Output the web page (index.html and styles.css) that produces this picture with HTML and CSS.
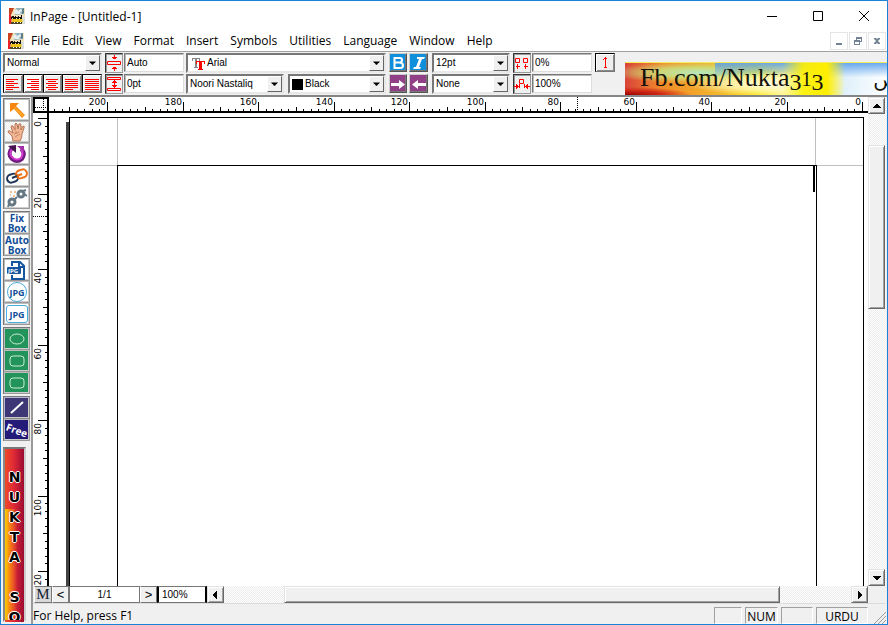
FILE: index.html
```html
<!DOCTYPE html>
<html lang="en">
<head>
<meta charset="utf-8">
<title>InPage - [Untitled-1]</title>
<link rel="stylesheet" href="styles.css">
</head>
<body>
<svg class="defs" aria-hidden="true">
  <symbol id="app" viewBox="0 0 16 16">
    <rect width="16" height="16" fill="#f1e3bd"/>
    <path d="M0 0h5l-3 7-2 6z" fill="#c8421e"/><path d="M0 6l3 3-1 7H0z" fill="#e8232a"/>
    <path d="M7 0h8v6l-9 1z" fill="#8fb3bd"/><path d="M5 3l3-2 1 2 3-2 2 2-3 1 1 2H6z" fill="#e9eef0"/><path d="M13 1l2-1v5l-2 1z" fill="#5d7d86"/>
    <path d="M2 9h1V8h2v1h1V8h1v1h2V8h1v1h2V7h1v4h-2v-1h-1v1H8v-1H7v1H4v-1H3v1H2z" fill="#17130d"/>
    <path d="M3 11h11v3H3z" fill="#ecc51c"/><path d="M2 14h11v2H2z" fill="#4d4726"/><path d="M13 9h3v7h-2z" fill="#d9dfe0"/>
    <path d="M5 14h1v1H5zM8 14h1v1H8zM11 14h1v1h-1z" fill="#fff"/>
  </symbol>
  <symbol id="down" viewBox="0 0 16 16"><path d="M4 6h8v1h-1v1h-1v1H9v1H7V9H6V8H5V7H4z"/></symbol>
  <symbol id="up" viewBox="0 0 16 16"><path d="M4 10h8V9h-1V8h-1V7H9V6H7v1H6v1H5v1H4z"/></symbol>
  <symbol id="left" viewBox="0 0 16 16"><path d="M9 4v8H8v-1H7v-1H6V9H5V7h1V6h1V5h1V4z"/></symbol>
  <symbol id="right" viewBox="0 0 16 16"><path d="M6 4v8h1v-1h1v-1h1V9h1V7H9V6H8V5H7V4z"/></symbol>
</svg>

<div class="window">
  <header class="titlebar">
    <svg class="app-icon"><use href="#app"/></svg>
    <h1>InPage - [Untitled-1]</h1>
    <div class="caption">
      <button aria-label="Minimize"><svg viewBox="0 0 12 12"><path d="M1 6.500h10"/></svg></button>
      <button aria-label="Maximize"><svg viewBox="0 0 12 12"><path d="M1.500 1.500h9v9h-9z"/></svg></button>
      <button aria-label="Close"><svg viewBox="0 0 12 12"><path d="M1 1l10 10M11 1L1 11"/></svg></button>
    </div>
  </header>

  <nav class="menubar">
    <svg class="app-icon"><use href="#app"/></svg>
    <div class="menus">
      <button>File</button><button>Edit</button><button>View</button><button>Format</button><button>Insert</button><button>Symbols</button><button>Utilities</button><button>Language</button><button>Window</button><button>Help</button>
    </div>
    <div class="mdi">
      <button aria-label="Minimize document"><svg viewBox="0 0 16 16"><path d="M5 10h6v2H5z"/></svg></button>
      <button aria-label="Restore document"><svg viewBox="0 0 16 16"><path d="M6 4h6v5h-2V8h1V6H7v1H6zM4 7h6v5H4zM5 9v2h4V9z" fill-rule="evenodd"/></svg></button>
      <button aria-label="Close document"><svg viewBox="0 0 16 16"><path d="M5 5h2l1 1 1-1h2v1L9 8l2 2v1H9L8 10l-1 1H5v-1l2-2-2-2z"/></svg></button>
    </div>
  </nav>

  <div class="toolbar">
    <div class="group g-style">
      <label class="combo"><select aria-label="Style"><option>Normal</option></select><svg><use href="#down"/></svg></label>
      <div class="aligns">
        <button class="tb" aria-label="Align left"><svg viewBox="0 0 16 14"><path d="M1 2.500h12M1 4.500h8M1 6.500h12M1 8.500h8M1 10.500h13M1 12.500h7"/></svg></button>
        <button class="tb on" aria-label="Align right"><svg viewBox="0 0 16 14"><path d="M2 2.500h12M6 4.500h8M2 6.500h12M6 8.500h8M2 10.500h12M6 12.500h8"/></svg></button>
        <button class="tb" aria-label="Align centre"><svg viewBox="0 0 16 14"><path d="M2 2.500h12M4 4.500h8M2 6.500h12M4 8.500h8M2 10.500h12M4 12.500h8"/></svg></button>
        <button class="tb" aria-label="Justify"><svg viewBox="0 0 16 14"><path d="M1 2.500h13M1 4.500h13M1 6.500h13M1 8.500h13M1 10.500h13M1 12.500h8"/></svg></button>
        <button class="tb" aria-label="Force justify"><svg viewBox="0 0 16 14"><path d="M1 2.500h14M1 4.500h14M1 6.500h14M1 8.500h14M1 10.500h14M1 12.500h14"/></svg></button>
      </div>
    </div>
    <div class="group g-space g-lines">
      <span class="sign"><svg viewBox="0 0 16 16"><path d="M1.500 6.500h13v3h-13zM8.500 0v4M8.500 12v4M6 2.500h5M7 3.500h3M7 12.500h3M6 13.500h5"/></svg></span><input aria-label="Line spacing" value="Auto">
      <span class="sign"><svg viewBox="0 0 16 16"><path d="M1.500 1.500h13v2h-13zM1.500 12.500h13v2h-13zM8.500 4v8M7 5.500h3M6 6.500h5M6 9.500h5M7 10.500h3"/></svg></span><input aria-label="Paragraph spacing" value="0pt">
    </div>
    <div class="group g-font">
      <label class="combo wide"><svg class="tt" viewBox="0 0 14 14"><path d="M0 1h8v3H7V2H5v8h1v1H2v-1h1V2H1v2H0z" fill="#888"/><path d="M4 4h9v3h-1V5h-2v7h1v1H6v-1h1V5H5v2H4z" fill="#f00"/></svg><select class="with-icon" aria-label="Font"><option>Arial</option></select><svg><use href="#down"/></svg></label>
      <label class="combo"><select aria-label="Urdu font"><option>Noori Nastaliq</option></select><svg><use href="#down"/></svg></label>
      <label class="combo"><span class="swatch"></span><select aria-label="Colour"><option>Black</option></select><svg><use href="#down"/></svg></label>
    </div>
    <div class="group g-marks">
      <button class="mark blue" aria-label="Bold"><svg viewBox="0 0 16 16"><path d="M4.500 3h5.500q2 0 2 2t-2 2.500q3 .5 3 3T10 13H4.500zM5 7.500h5" fill="none" stroke="#fff" stroke-width="2"/></svg></button>
      <button class="mark blue" aria-label="Italic"><svg viewBox="0 0 16 16"><path d="M6 2h8l-1 2h-2L8 12h2l-1 2H2l1-2h2l3-8H6z" fill="#fff"/></svg></button>
      <button class="mark plum" aria-label="Left to right"><svg viewBox="0 0 16 16"><path d="M1 7h8V4l6 4.500L9 13v-3H1z" fill="#fff"/></svg></button>
      <button class="mark plum" aria-label="Right to left"><svg viewBox="0 0 16 16"><path d="M15 7H7V4L1 8.500 7 13v-3h8z" fill="#fff"/></svg></button>
    </div>
    <div class="group g-size">
      <label class="combo"><select aria-label="Font size"><option>12pt</option></select><svg><use href="#down"/></svg></label>
      <label class="combo"><select aria-label="Text effect"><option>None</option></select><svg><use href="#down"/></svg></label>
    </div>
    <div class="group g-space">
      <span class="sign"><svg viewBox="0 0 16 16"><path d="M1.500 3.500h4v4h-4zM9.500 3.500h4v4h-4zM3.500 9v5M2 11.500h4M11.500 9v5M10 11.500h4"/></svg></span><input aria-label="Letter spacing" value="0%">
      <span class="sign"><svg viewBox="0 0 16 16"><path d="M5.500 3.500h4v4h-4zM0 10.500h5M11 10.500h5M2.500 8v5M13.500 8v5M3.500 9v3M12.500 9v3M5.500 8v4M10.500 8v4"/></svg></span><input aria-label="Text scale" value="100%">
    </div>
    <button class="tb caret-up" aria-label="Raise"><svg viewBox="0 0 16 16"><path d="M8.500 2v11M7 3.500h3M6 4.500h1M7 12.500h3"/></svg></button>
    <div class="banner"><span>Fb.com/Nukta<span class="low">3</span><span class="small">1</span><span class="low">3</span></span><span class="urdu" lang="ur">یں</span></div>
  </div>

  <div class="body">
    <aside class="tools">
      <div class="set">
        <button aria-label="Pointer"><svg viewBox="0 0 24 20"><path d="M5 3h9l-3 3 9 9-3 3-8-9-4 3z" fill="#f7860e"/><path d="M9 8l8 9 2-2-9-8z" fill="#fca72b"/></svg></button>
        <button class="dither" aria-label="Hand"><svg viewBox="0 0 24 20"><path d="M8 19l-1-5-4-4q0-2 2-1l3 2-2-6q0-2 2-1l2 4V2q1-2 2 0l1 5 1-5q2-1 2 1v5l2-4q2 0 1 2l-2 6q0 4-2 7z" fill="#f3b694" stroke="#b57557"/><path d="M9 12l5-2M10 15l5-3M11 9v3" stroke="#c98766" fill="none"/></svg></button>
        <button aria-label="Rotate"><svg viewBox="0 0 24 20"><path d="M7 4q-5 6 0 11 5 4 10 0 4-6-1-10" fill="none" stroke="#731b80" stroke-width="4"/><path d="M7 5q-4 5 1 9 4 3 8 0 3-4 0-9" fill="none" stroke="#d53bd4" stroke-width="2"/><path d="M3 2l8-1v8z" fill="#46124f"/><path d="M12 2h7v6z" fill="#a12fa8"/></svg></button>
        <button aria-label="Link"><svg viewBox="0 0 24 20"><g fill="none" stroke-width="2"><rect x="2" y="8" width="11" height="8" rx="4" transform="rotate(-18 8 12)" stroke="#1d3557"/><rect x="11" y="4" width="11" height="8" rx="4" transform="rotate(-18 16 8)" stroke="#ef6f12"/><path d="M7 12l5-2" stroke="#1d3557"/><path d="M12 10l5-2" stroke="#ef6f12"/></g></svg></button>
        <button aria-label="Unlink"><svg viewBox="0 0 24 20"><g fill="none" stroke="#657782" stroke-width="3"><circle cx="16" cy="6" r="3"/><circle cx="7" cy="14" r="3"/></g><g stroke="#657782" stroke-width="2"><path d="M19 6l3 2M18 3l3-1M9 12l3-3M4 16l-1 3"/></g><path d="M5 4h2M9 4h2M5 7h1M8 8h2" stroke="#f18426"/></svg></button>
      </div>
      <div class="set words">
        <button>Fix<br>Box</button>
        <button>Auto<br>Box</button>
      </div>
      <div class="set jpg">
        <button aria-label="Picture file"><svg viewBox="0 0 24 20"><path d="M7 6V2h8l4 4v13H7v-4M14 2v5h5" fill="none" stroke="#15569e" stroke-width="2"/><rect x="2" y="7" width="14" height="7" rx="1" fill="#15569e"/><text x="3" y="13">JPG</text></svg></button>
        <button class="round">JPG</button>
        <button class="square">JPG</button>
      </div>
      <div class="set green">
        <button aria-label="Ellipse"><svg viewBox="0 0 24 20"><ellipse cx="12" cy="10" rx="7" ry="5"/></svg></button>
        <button aria-label="Rounded box"><svg viewBox="0 0 24 20"><rect x="5" y="5" width="14" height="10" rx="3"/></svg></button>
        <button aria-label="Box"><svg viewBox="0 0 24 20"><rect x="5" y="5" width="14" height="10" rx="3"/></svg></button>
      </div>
      <div class="set navy">
        <button class="line" aria-label="Line"><svg viewBox="0 0 24 20"><path d="M6 15L18 4" stroke="#fff" stroke-width="2"/></svg></button>
        <button class="free"><span>Free</span></button>
      </div>
      <div class="strip"><span>N</span><span>U</span><span>K</span><span>T</span><span>A</span><span></span><span>S</span><span>O</span></div>
    </aside>

    <div class="main">
      <div class="work">
        <div class="corner"><svg viewBox="0 0 12 12"><path d="M8.500 0v12M0 8.500h12" stroke="#000" stroke-dasharray="1 1"/></svg></div>
        <svg class="ruler-h" id="ruler-h"></svg>
        <svg class="ruler-v" id="ruler-v"></svg>
        <div class="canvas">
          <div class="page"><div class="frame"><span class="cursor"></span></div></div>
        </div>
        <div class="vscroll">
          <button class="arrow" aria-label="Scroll up"><svg><use href="#up"/></svg></button>
          <div class="thumb"></div>
          <button class="arrow end" aria-label="Scroll down"><svg><use href="#down"/></svg></button>
        </div>
      </div>
      <div class="pager">
        <button class="master">M</button><button class="step">&lt;</button><input class="page-no" aria-label="Page" value="1/1"><button class="step">&gt;</button><input class="zoom" aria-label="Zoom" value="100%">
        <div class="hscroll">
          <button class="arrow" aria-label="Scroll left"><svg><use href="#left"/></svg></button>
          <div class="thumb"></div>
          <button class="arrow end" aria-label="Scroll right"><svg><use href="#right"/></svg></button>
        </div>
        <div class="box"></div>
      </div>
      <footer class="status">
        <span class="message">For Help, press F1</span>
        <span class="cell caps"></span><span class="cell num">NUM</span><span class="cell scrl"></span><span class="cell lang">URDU</span>
        <svg class="grip" viewBox="0 0 12 14"><path d="M0 14L12 2M4 14l8-8M8 14l4-4" stroke="#9a9a9a"/></svg>
      </footer>
    </div>
  </div>
</div>
<script src="rulers.js"></script>
</body>
</html>
```
FILE: rulers.js
```js
// Rulers in millimetres; the horizontal one counts leftwards from the page's right edge.
const PX_PER_MM = 3.775;
const ORIGIN_FROM_RIGHT = 6;
const ORIGIN_FROM_TOP = 5;

function tickLength(mm) {
  if (mm % 20 === 0) return 9;
  return mm % 10 === 0 ? 4 : 2;
}

function drawHorizontal() {
  const svg = document.getElementById('ruler-h');
  const width = svg.clientWidth;
  let out = '';
  for (let mm = 0; mm * PX_PER_MM < width; mm += 2) {
    const x = Math.round(width - ORIGIN_FROM_RIGHT - mm * PX_PER_MM);
    const len = tickLength(mm);
    out += `<rect x="${x}" y="${14 - len}" width="1" height="${len}"/>`;
    if (len === 9) out += `<text x="${x - 1}" y="8" text-anchor="end">${mm}</text>`;
  }
  out += `<path d="M${width - 290.5} 0v14" stroke="#000" stroke-dasharray="1 1"/>`;
  svg.innerHTML = out;
}

function drawVertical() {
  const svg = document.getElementById('ruler-v');
  const height = svg.clientHeight;
  let out = '';
  for (let mm = 0; mm * PX_PER_MM < height + 20; mm += 2) {
    const y = Math.round(ORIGIN_FROM_TOP + mm * PX_PER_MM);
    const len = tickLength(mm);
    out += `<rect x="${14 - len}" y="${y}" width="${len}" height="1"/>`;
    if (len === 9) out += `<text transform="translate(8 ${y + 3}) rotate(-90)" text-anchor="end">${mm}</text>`;
  }
  out += '<path d="M0 103.500h14" stroke="#000" stroke-dasharray="1 1"/>';
  svg.innerHTML = out;
}

function draw() {
  drawHorizontal();
  drawVertical();
}

draw();
window.addEventListener('resize', draw);
```
FILE: styles.css
```css
* { box-sizing: border-box; }
body { margin: 0; font-family: "Open Sans", "Noto Sans", sans-serif; font-size: 12px; color: #000; }
button, input, select { font: inherit; color: inherit; margin: 0; padding: 0; border: 0; border-radius: 0; background: none; }
button { display: flex; align-items: center; justify-content: center; }
svg { display: block; flex: none; }
.defs { display: none; }

.window { display: flex; flex-direction: column; height: 100vh; border: 1px solid #1883d7; background: #f0f0f0; overflow: hidden; }

.titlebar { display: flex; align-items: center; flex: none; height: 30px; padding-left: 8px; background: #fff; }
.titlebar h1 { margin: 0 0 0 5px; font-size: 12px; font-weight: 400; flex: 1; }
.app-icon { width: 16px; height: 16px; }
.caption { display: flex; }
.caption button { width: 46px; height: 28px; }
.caption svg { width: 12px; height: 12px; fill: none; stroke: #000; }

.menubar { display: flex; align-items: center; flex: none; height: 20px; padding: 0 1px 0 7px; background: #fff; }
.menus { display: flex; flex: 1; margin-left: 1px; padding-bottom: 1px; }
.menus button { padding: 0 6px; }
.mdi { display: flex; gap: 1px; }
.mdi button { width: 18px; height: 18px; border: 1px solid #e5e5e5; }
.mdi svg { width: 16px; height: 16px; fill: #738294; }

.toolbar { display: flex; flex: none; height: 46px; padding: 1px 0 0 2px; border-top: 1px solid #a0a0a0; border-bottom: 2px solid #858585; font: 10px "Liberation Sans", sans-serif; }
.group { display: grid; grid-template-rows: 20px 20px; row-gap: 1px; align-content: start; flex: none; }
.g-style { width: 99px; margin-right: 3px; }
.g-space { grid-template-columns: 18px 60px; column-gap: 1px; width: 79px; margin-right: 3px; }
.g-lines { margin-right: 2px; }
.g-font { grid-template-columns: 98px 98px; column-gap: 4px; margin-right: 3px; }
.g-marks { grid-template-columns: 18px 19px; column-gap: 2px; margin-right: 4px; }
.g-size { width: 78px; margin-right: 3px; }
.combo { position: relative; display: flex; background: #fff; border: 2px solid; border-color: #777 #e8e8e8 #e8e8e8 #777; }
.combo.wide { grid-column: span 2; }
.combo select { appearance: none; flex: 1; min-width: 0; padding: 0 0 1px 2px; outline: 0; }
.combo svg:last-child { width: 15px; height: 16px; background: #f0f0f0; border: 1px solid; border-color: #fff #666 #666 #fff; }
.tt { width: 14px; height: 14px; margin: 2px 0 0 4px; }
.combo .with-icon { padding-left: 1px; }
.swatch { width: 11px; height: 11px; margin: 3px 0 0 2px; background: #000; flex: none; }
.aligns { display: flex; }
.tb { flex: 1; height: 19px; background: #eee; border: 1px solid; border-color: #000 #777 #777 #000; box-shadow: inset 1px 1px #fff, inset -1px -1px #888; }
.tb svg, .sign svg { width: 16px; height: 16px; fill: none; stroke: #f00; }
.tb.on { background: #fff; }
.aligns .tb svg { height: 14px; }
.sign { display: flex; align-items: center; justify-content: center; border: 1px solid; border-color: #333 #999 #999 #333; box-shadow: inset 1px 1px #999; }
.g-space input { width: 100%; height: 19px; padding: 0 2px; background: #fff; border: 1px solid; border-color: #777 #ddd #ddd #777; box-shadow: inset 1px 1px #bbb; }
.mark { height: 19px; border: 1px solid; border-color: #ccc #555 #555 #ccc; box-shadow: inset -1px -1px #777; }
.mark svg { width: 16px; height: 16px; }
.blue { background: #0e8fdc; }
.plum { background: #913f86; }
.tb.caret-up { flex: none; width: 20px; }
.banner { display: flex; align-items: center; justify-content: space-between; flex: 1; min-width: 0; height: 33px; margin: 9px 0 0 10px; padding-left: 15px; border-top: 1px solid #f6ec5c; overflow: hidden; white-space: nowrap;
  font: 26px "Liberation Serif", serif; color: #14120a;
  background:
    linear-gradient(90deg, transparent 60%, rgba(255,240,0,.9) 68%, #ffee00 77%, transparent 84%),
    radial-gradient(ellipse at 55% 65%, #fffbe0 0, rgba(255,250,200,.7) 22%, transparent 40%),
    linear-gradient(180deg, rgba(90,160,235,.9) 0, transparent 45%) 90px 0 no-repeat,
    radial-gradient(ellipse at 28% 30%, #b5e7c0 0, rgba(200,230,130,.8) 16%, transparent 34%),
    radial-gradient(ellipse at 0 100%, #980000 0, #d02a16 10%, transparent 18%),
    linear-gradient(90deg, #d9443a 0, #f08a2a 14%, #f3b72c 36%, #ffe722 50%, #fff6a0 62%, #dff0fb 84%, #fff 100%); }
.low { font-size: 24px; vertical-align: -4px; }
.small { font-size: 20px; }
.urdu { font: 20px "DejaVu Sans", sans-serif; margin-right: -7px; }

.body { display: flex; flex: 1; min-height: 0; padding-right: 1px; }
.tools { display: flex; flex-direction: column; flex: none; width: 32px; padding: 1px 1px 2px 2px; border-right: 2px solid #999; overflow: hidden; }
.set { flex: none; margin-bottom: 2px; border-top: 1px solid #777; border-left: 1px solid #777; }
.set button { position: relative; width: 100%; height: 22px; background: #fff; border: 1px solid; border-color: #bbb #999 #999 #bbb; box-shadow: inset -1px -1px #ccc; }
.set svg { width: 24px; height: 20px; }
.set .dither, .vscroll, .hscroll { background: repeating-conic-gradient(#fff 0 25%, #ececec 0 50%) 0 0 / 2px 2px; }
.words button { font: bold 10px/10px "Open Sans", sans-serif; color: #124e99; text-align: center; }
.jpg button { font: bold 9px "Open Sans", sans-serif; color: #124e99; }
.jpg text { font: bold 6px "Open Sans", sans-serif; fill: #fff; }
.jpg .round::before, .jpg .square::before { content: ""; position: absolute; inset: 0 2px; border: 1px solid #4aabdf; border-radius: 50%; }
.jpg .square::before { inset: 1px; border-radius: 3px; }
.green button { background: #22935a; }
.green svg { fill: none; stroke: #c9ecd2; }
.navy .line { background: #3e3775; border-color: #b7b3d2 #888 #888 #b7b3d2; }
.navy .free { background: #241b78; color: #fff; font: bold 10px "Open Sans", sans-serif; }
.free span { transform: rotate(20deg); }
.strip { display: flex; flex-direction: column; flex: 1; min-height: 0; width: 23px; margin-top: 4px; padding-top: 18px; border: 2px solid; border-color: #777 #ccc transparent #888; overflow: hidden;
  background: linear-gradient(90deg, rgba(255,220,0,.9) 0, rgba(255,180,0,.6) 25%, transparent 65%) 0 100% / 100% 65% no-repeat, linear-gradient(90deg, #ef4a28 0, #e02a36 45%, #9b0b32 100%); }
.strip span { flex: none; height: 20px; text-align: center; font: bold 14px/20px "DejaVu Sans", sans-serif; text-shadow: 1px 0 #fff, -1px 0 #fff, 0 1px #fff, 0 -1px #fff; }

.main { display: flex; flex-direction: column; flex: 1; min-width: 0; }
.work { display: grid; grid-template-columns: 16px minmax(0, 1fr) 18px; grid-template-rows: 16px minmax(0, 1fr); flex: 1; min-height: 0; background: #fff; }
.corner { border: 2px solid #000; }
.corner svg { width: 12px; height: 12px; }
.ruler-h { width: 100%; height: 16px; border-bottom: 2px solid #000; font: 9px "DejaVu Sans", sans-serif; }
.ruler-v { grid-row: 2; grid-column: 1; width: 16px; height: 100%; border-right: 2px solid #000; font: 9px "DejaVu Sans", sans-serif; }
.canvas { grid-row: 2; grid-column: 2; padding: 4px 4px 0 20px; overflow: hidden; }
.page { position: relative; height: 1123px; padding: 47px 46px 0 47px; border: 1px solid #000; background: linear-gradient(#c0c0c0, #c0c0c0) 47px 0 / 1px 100% no-repeat, linear-gradient(#c0c0c0, #c0c0c0) right 47px top 0 / 1px 100% no-repeat, linear-gradient(#c0c0c0, #c0c0c0) 0 47px / 100% 1px no-repeat, #fff; }
.page::before { content: ""; position: absolute; left: -4px; top: 4px; width: 3px; height: 100%; background: #404244; }
.frame { display: flex; justify-content: flex-end; height: 1000px; border: 1px solid #000; background: #fff; }
.cursor { width: 2px; height: 26px; margin-right: 1px; background: #000; }

.vscroll { grid-row: 1 / 3; grid-column: 3; display: flex; flex-direction: column; }
.arrow, .thumb { flex: none; background: #f0f0f0; border: 1px solid; border-color: #e3e3e3 #696969 #696969 #e3e3e3; box-shadow: inset 1px 1px #fff, inset -1px -1px #a0a0a0; }
.arrow { width: 17px; height: 17px; }
.arrow svg { width: 16px; height: 16px; }
.vscroll .thumb { width: 17px; height: 164px; margin-top: 31px; }
.vscroll .end { margin-top: auto; }

.pager { display: flex; flex: none; height: 17px; padding-left: 1px; font: 10px "Liberation Sans", sans-serif; }
.pager > button { width: 17px; background: #f0f0f0; border: 1px solid; border-color: #777 #777 #777 #fff; }
.pager .master { width: 18px; background: #d8d8d8; font: 15px "Liberation Serif", serif; color: #123; }
.pager .step { font: 13px "Liberation Sans", sans-serif; }
.pager input { background: #fff; border: 1px solid #777; }
.pager .page-no { width: 71px; padding-bottom: 1px; text-align: center; }
.pager .zoom { width: 50px; padding: 0 3px 1px; border-left: 2px solid #000; border-right: 2px solid #000; }
.hscroll { display: flex; flex: 1; }
.hscroll .thumb { width: 75%; margin-left: 60px; }
.hscroll .end { margin-left: auto; }
.box { width: 18px; }

.status { display: flex; align-items: flex-start; flex: none; height: 21px; padding: 3px 0 0; border-top: 1px solid #dcdcdc; }
.message { flex: 1; line-height: 17px; }
.cell { height: 17px; line-height: 17px; margin-left: 3px; border: 1px solid; border-color: #a0a0a0 #fff #fff #a0a0a0; text-align: center; }
.caps { width: 28px; }
.num { width: 33px; }
.scrl { width: 32px; }
.lang { width: 52px; }
.grip { width: 12px; height: 14px; margin: 3px 0 0 6px; }
```
